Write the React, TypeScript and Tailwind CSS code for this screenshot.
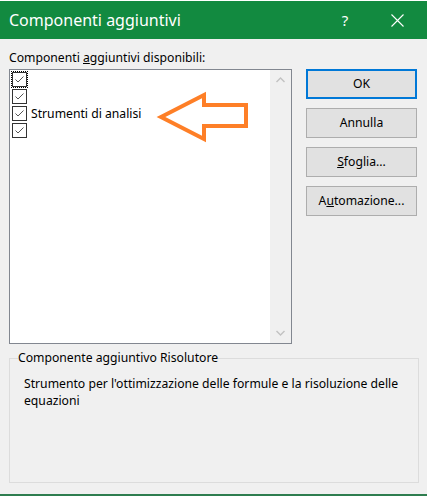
import React from "react";

const font = { fontFamily: '"Noto Sans", "Open Sans", sans-serif' };

function Check({ focus }: { focus?: boolean }) {
  return (
    <div
      className={
        "w-[17px] h-[17px] flex items-center justify-center " +
        (focus ? "border border-dotted border-black" : "border border-transparent")
      }
    >
      <svg width="15" height="15" viewBox="0 0 15 15">
        <rect x="0.5" y="0.5" width="14" height="14" fill="#fff" stroke="#333" />
        <path d="M3.5 7.5 L6 10 L11.5 4.5" fill="none" stroke="#555" strokeWidth="1" />
      </svg>
    </div>
  );
}

function Btn({ children, primary }: { children: React.ReactNode; primary?: boolean }) {
  return (
    <div
      className={
        "h-[30px] w-[111px] flex items-center justify-center bg-[#e1e1e1] text-[12.2px] text-black " +
        (primary ? "border-2 border-[#0078d7]" : "border border-[#adadad]")
      }
    >
      {children}
    </div>
  );
}

export default function App() {
  return (
    <div className="w-[427px] h-[496px] bg-[#f0f0f0] flex flex-col overflow-hidden" style={font}>
      <div className="h-[1px] bg-white" />
      <div className="h-[38px] bg-[#128a40] flex items-center text-white shrink-0">
        <div className="pl-[9px] text-[16px] flex-1 leading-none">Componenti aggiuntivi</div>
        <div className="w-[20px] text-[15px] text-center leading-none mr-[36px]">?</div>
        <svg width="13" height="13" viewBox="0 0 13 13" className="mr-[23px]">
          <path d="M0.5 0.5 L12.5 12.5 M12.5 0.5 L0.5 12.5" stroke="#fff" strokeWidth="1.1" />
        </svg>
      </div>
      <div className="flex-1 flex flex-col pl-[9px]">
        <div className="flex">
          <div className="flex flex-col">
            <div className="h-[30px] pt-[10px] text-[12.2px] leading-[18px] text-black">
              Componenti <span className="underline">a</span>ggiuntivi disponibili:
            </div>
            <div className="relative w-[283px] h-[275px] border border-[#828790] bg-white flex">
              <div className="flex-1 flex flex-col pt-[1px] pl-[1px]">
                <div className="h-[17px] flex items-center"><Check focus /></div>
                <div className="h-[17px] flex items-center"><Check /></div>
                <div className="h-[17px] flex items-center">
                  <Check />
                  <span className="ml-[3px] text-[12.2px] text-black leading-none pt-[2px]">Strumenti di analisi</span>
                </div>
                <div className="h-[17px] flex items-center"><Check /></div>
              </div>
              <div className="w-[21px] bg-[#f0f0f0] flex flex-col items-center justify-between py-[7px]">
                <svg width="9" height="6" viewBox="0 0 9 6">
                  <path d="M0.5 5 L4.5 1 L8.5 5" fill="none" stroke="#c2c2c2" strokeWidth="1.4" />
                </svg>
                <svg width="9" height="6" viewBox="0 0 9 6">
                  <path d="M0.5 1 L4.5 5 L8.5 1" fill="none" stroke="#c2c2c2" strokeWidth="1.4" />
                </svg>
              </div>
              <svg
                className="absolute left-0 top-0"
                width="283"
                height="275"
                viewBox="0 0 283 275"
              >
                <polygon
                  points="151,47 194,25 194,35 236,35 236,56 194,56 194,69"
                  fill="none"
                  stroke="#fe7f27"
                  strokeWidth="4"
                  strokeLinejoin="miter"
                />
              </svg>
            </div>
          </div>
          <div className="flex flex-col gap-[9px] ml-[14px] mt-[30px]">
            <Btn primary>OK</Btn>
            <Btn>Annulla</Btn>
            <Btn>
              <span className="underline">S</span>foglia...
            </Btn>
            <Btn>
              A<span className="underline">u</span>tomazione...
            </Btn>
          </div>
        </div>
        <fieldset className="mt-[6px] w-[410px] h-[133px] border border-[#dcdcdc] pl-[8px] pr-[8px]">
          <legend className="text-[12.2px] text-black leading-[16px] px-0">Componente aggiuntivo Risolutore</legend>
          <div className="pl-[6px] pt-[9px] text-[12.2px] leading-[17px] text-black">
            Strumento per l'ottimizzazione delle formule e la risoluzione delle equazioni
          </div>
        </fieldset>
      </div>
      <div className="h-[2px] bg-[#2e7d4f]" />
    </div>
  );
}
